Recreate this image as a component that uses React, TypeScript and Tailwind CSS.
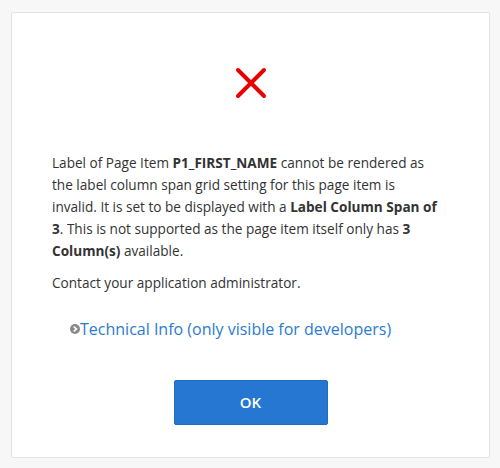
import React from "react";

export default function App() {
  return (
    <div className="w-[500px] h-[468px] bg-[#f7f7f7] pt-[12px] pl-[11px]" style={{ fontFamily: '"Open Sans", "Noto Sans", sans-serif' }}>
      <div className="w-[479px] h-[446px] bg-white border border-[#e3e3e3] rounded-[2px] flex flex-col">
        <div className="flex justify-center pt-[54px]">
          <svg width="32" height="32" viewBox="0 0 32 32">
            <path d="M3 3 L29 29 M29 3 L3 29" stroke="#e60000" strokeWidth="4" strokeLinecap="round" />
          </svg>
        </div>
        <div className="pl-[40px] pt-[53px] text-[13.6px] leading-[22px] text-[#333333] whitespace-nowrap">
          <p>Label of Page Item <b>P1_FIRST_NAME</b> cannot be rendered as</p>
          <p>the label column span grid setting for this page item is</p>
          <p>invalid. It is set to be displayed with a <b>Label Column Span of</b></p>
          <p><b>3</b>. This is not supported as the page item itself only has <b>3</b></p>
          <p><b>Column(s)</b> available.</p>
          <p className="mt-[10px]">Contact your application administrator.</p>
        </div>
        <div className="pl-[58px] pt-[24px] flex items-center text-[16px] leading-[22px] text-[#2b7bd0]">
          <svg width="10" height="10" viewBox="0 0 10 10" className="mr-[0px]">
            <circle cx="5" cy="5" r="5" fill="#8a8a8a" />
            <path d="M3.7 2.6 L6.5 5 L3.7 7.4" stroke="#fff" strokeWidth="1.6" fill="none" />
          </svg>
          <span>Technical Info (only visible for developers)</span>
        </div>
        <div className="flex justify-center pt-[40px]">
          <button className="w-[154px] h-[45px] bg-[#2577d1] border border-[#1f6cc0] rounded-[2px] text-white text-[15px] font-semibold">OK</button>
        </div>
      </div>
    </div>
  );
}
